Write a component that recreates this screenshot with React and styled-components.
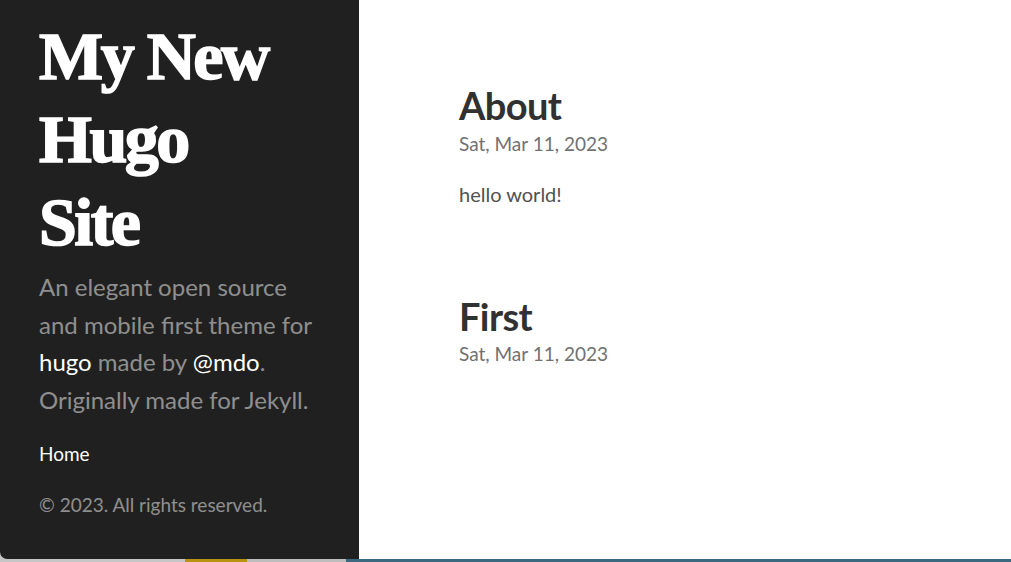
import React from "react";
import styled, { createGlobalStyle } from "styled-components";

const Global = createGlobalStyle`
  html, body { margin: 0; padding: 0; height: 100%; }
  body { background: #c6c6c6; font-family: Lato, "Noto Sans", sans-serif; }
  #root { height: 100%; }
  * { box-sizing: border-box; }
`;

const Screen = styled.div`
  display: flex;
  flex-direction: column;
  width: 1011px;
  height: 562px;
  overflow: hidden;
`;

const Window = styled.div`
  flex: 1;
  display: flex;
  background: #ffffff;
  border-bottom-left-radius: 7px;
  overflow: hidden;
`;

const Sidebar = styled.aside`
  width: 359px;
  flex-shrink: 0;
  background: #202020;
  padding: 15px 30px 0 39px;
  color: rgba(255, 255, 255, 0.5);
`;

const SiteTitle = styled.h1`
  margin: 0;
  max-width: 250px;
  font-family: "Liberation Serif", "DejaVu Serif", serif;
  font-weight: 700;
  font-size: 68px;
  line-height: 83px;
  letter-spacing: -2.5px;
  color: #ffffff;
  -webkit-text-stroke: 1.6px #ffffff;
`;

const Lead = styled.p`
  margin: 4px 0 0;
  font-size: 24px;
  line-height: 37.5px;
  color: rgba(255, 255, 255, 0.5);
`;

const LeadLink = styled.a`
  color: #ffffff;
  text-decoration: none;
`;

const Nav = styled.nav`
  margin-top: 18px;
  display: flex;
  flex-direction: column;
`;

const NavItem = styled.a`
  font-size: 19px;
  line-height: 35px;
  color: #ffffff;
  text-decoration: none;
`;

const Copyright = styled.p`
  margin: 19px 0 0;
  font-size: 19px;
  line-height: 30px;
  color: rgba(255, 255, 255, 0.5);
`;

const Content = styled.main`
  flex: 1;
  padding: 80px 40px 0 100px;
  display: flex;
  flex-direction: column;
  gap: 82px;
`;

const Post = styled.article`
  display: flex;
  flex-direction: column;
`;

const PostTitle = styled.h1`
  margin: 0;
  font-size: 38px;
  line-height: 50px;
  font-weight: 700;
  letter-spacing: -0.6px;
  color: #313131;
`;

const PostDate = styled.span`
  margin-top: ${(p) => p.$shift}px;
  font-size: 19px;
  line-height: 30px;
  color: #717171;
`;

const PostBody = styled.p`
  margin: 20px 0 0;
  font-size: 20px;
  line-height: 30px;
  color: #515151;
`;

const Backdrop = styled.div`
  height: 3px;
  display: flex;
`;

const Segment = styled.div`
  width: ${(p) => p.$w}px;
  flex: ${(p) => (p.$grow ? 1 : "none")};
  background: ${(p) => p.$c};
`;

export default function App() {
  return (
    <>
      <Global />
      <Screen>
        <Window>
          <Sidebar>
            <SiteTitle>My New Hugo Site</SiteTitle>
            <Lead>
              An elegant open source and mobile first theme for{" "}
              <LeadLink href="#">hugo</LeadLink> made by{" "}
              <LeadLink href="#">@mdo</LeadLink>. Originally made for Jekyll.
            </Lead>
            <Nav>
              <NavItem href="#">Home</NavItem>
            </Nav>
            <Copyright>© 2023. All rights reserved.</Copyright>
          </Sidebar>
          <Content>
            <Post>
              <PostTitle>About</PostTitle>
              <PostDate $shift={-1}>Sat, Mar 11, 2023</PostDate>
              <PostBody>hello world!</PostBody>
            </Post>
            <Post>
              <PostTitle>First</PostTitle>
              <PostDate $shift={-2}>Sat, Mar 11, 2023</PostDate>
            </Post>
          </Content>
        </Window>
        <Backdrop>
          <Segment $w={185} $c="#c6c6c6" />
          <Segment $w={62} $c="#b8930f" />
          <Segment $w={99} $c="#bdbdbd" />
          <Segment $grow $c="#3b6a80" />
        </Backdrop>
      </Screen>
    </>
  );
}
